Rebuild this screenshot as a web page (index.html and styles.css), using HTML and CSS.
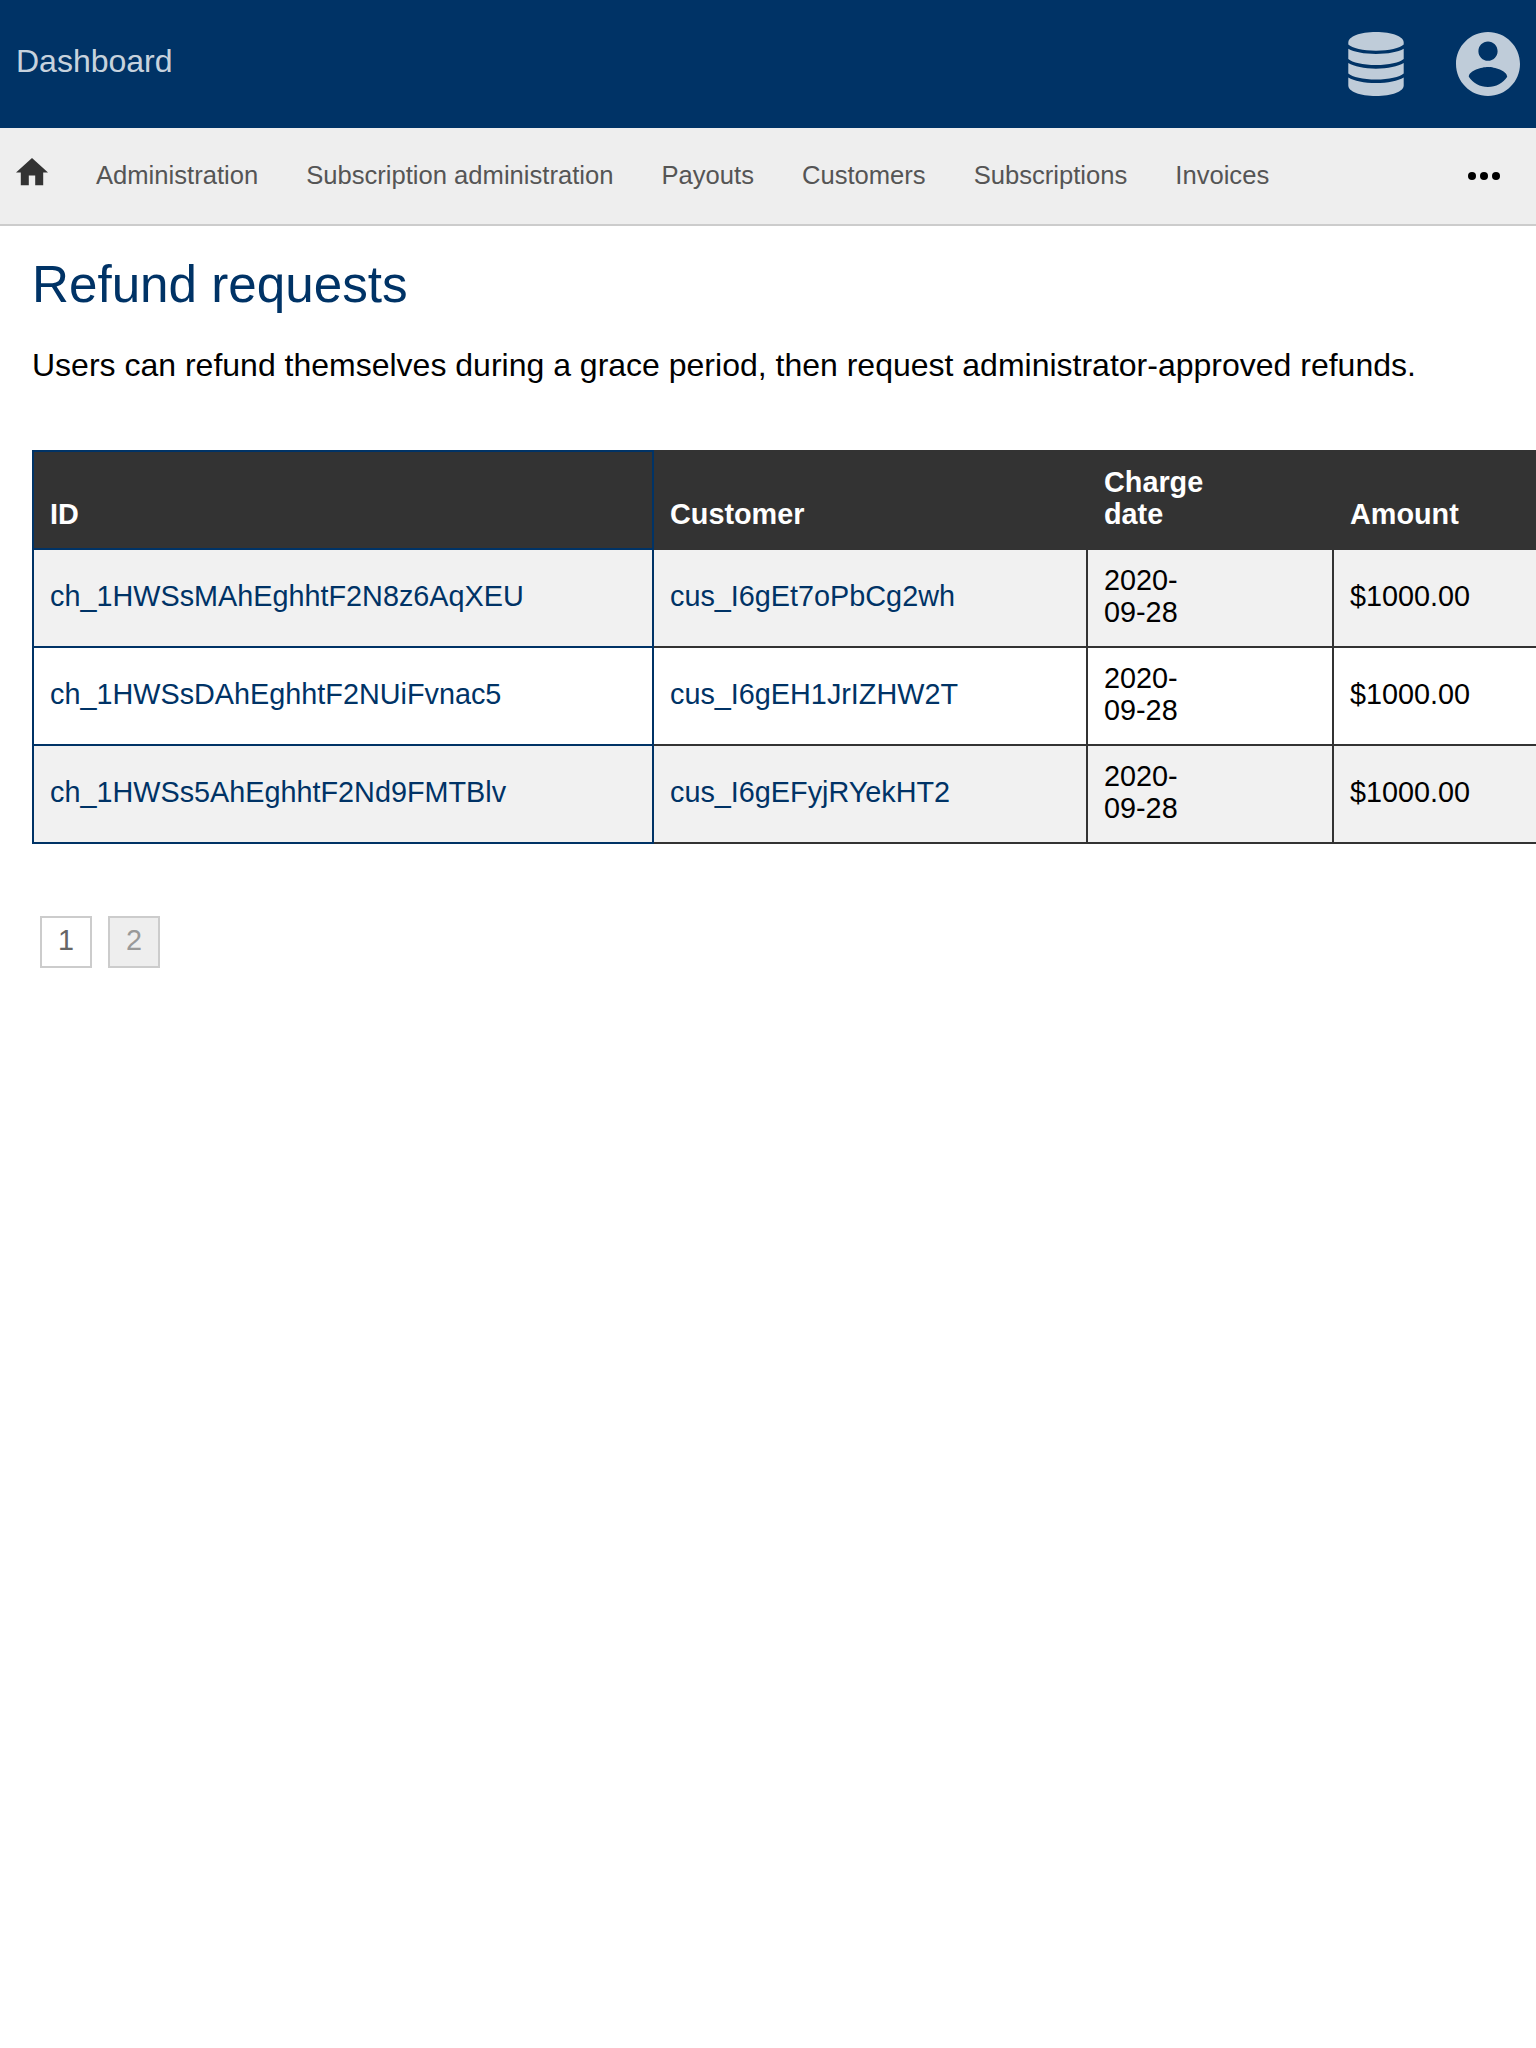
FILE: index.html
```html
<!DOCTYPE html>
<html lang="en">
<head>
<meta charset="utf-8">
<title>Refund requests</title>
<link rel="stylesheet" href="styles.css">
</head>
<body>
<header class="header">
  <a class="brand">Dashboard</a>
  <div class="header-menus">
    <svg class="icon-database" viewBox="0 0 56 64">
      <path d="M28 0C44 0 55.700 4.600 55.700 10.500V12.500C52 16 41 18.700 28 18.700S4 16 .3 12.500V10.500C.3 4.600 12 0 28 0z"/>
      <path d="M.3 16.800C6 20 16 22 28 22s22-2 27.700-5.200V27c-4 3.500-14.700 6-27.700 6S4.300 30.500.3 27z"/>
      <path d="M.3 31.100c5.700 3.500 15.700 5.600 27.700 5.600s22-2.100 27.700-5.600v10.400c-4 3.500-14.700 6-27.700 6S4.300 45 .3 41.500z"/>
      <path d="M.3 45.400C6 48.900 16 51 28 51s22-2.100 27.700-5.600V53.500C55.700 59.400 44 64 28 64S.3 59.400.3 53.500z"/>
    </svg>
    <svg class="icon-account" viewBox="2 2 20 20">
      <path d="M12 2C6.480 2 2 6.480 2 12s4.480 10 10 10 10-4.480 10-10S17.520 2 12 2zm0 3c1.660 0 3 1.340 3 3s-1.340 3-3 3-3-1.340-3-3 1.340-3 3-3zm0 14.200c-2.500 0-4.710-1.280-6-3.220.03-1.990 4-3.080 6-3.080 1.990 0 5.970 1.090 6 3.080-1.290 1.940-3.500 3.220-6 3.220z"/>
    </svg>
  </div>
</header>
<nav class="navigation">
  <svg class="icon-home" viewBox="2 3 20 17" preserveAspectRatio="none"><path d="M10 20v-6h4v6h5v-8h3L12 3 2 12h3v8z"/></svg>
  <a>Administration</a>
  <a>Subscription administration</a>
  <a>Payouts</a>
  <a>Customers</a>
  <a>Subscriptions</a>
  <a>Invoices</a>
  <svg class="icon-more" viewBox="0 0 32 8"><circle cx="4" cy="4" r="4"/><circle cx="16" cy="4" r="4"/><circle cx="28" cy="4" r="4"/></svg>
</nav>
<main class="content">
  <h1>Refund requests</h1>
  <p>Users can refund themselves during a grace period, then request administrator-approved refunds.</p>
  <table class="list">
    <colgroup><col class="col-id"><col class="col-customer"><col class="col-date"><col class="col-amount"></colgroup>
    <thead>
      <tr><th>ID</th><th>Customer</th><th>Charge<br>date</th><th>Amount</th></tr>
    </thead>
    <tbody>
      <tr><td><a>ch_1HWSsMAhEghhtF2N8z6AqXEU</a></td><td><a>cus_I6gEt7oPbCg2wh</a></td><td>2020-<br>09-28</td><td>$1000.00</td></tr>
      <tr><td><a>ch_1HWSsDAhEghhtF2NUiFvnac5</a></td><td><a>cus_I6gEH1JrIZHW2T</a></td><td>2020-<br>09-28</td><td>$1000.00</td></tr>
      <tr><td><a>ch_1HWSs5AhEghhtF2Nd9FMTBlv</a></td><td><a>cus_I6gEFyjRYekHT2</a></td><td>2020-<br>09-28</td><td>$1000.00</td></tr>
    </tbody>
  </table>
  <div class="pages">
    <a class="page current">1</a>
    <a class="page">2</a>
  </div>
</main>
</body>
</html>
```
FILE: styles.css
```css
* { box-sizing: border-box; }
html { height: 100%; }
body {
  margin: 0;
  min-height: 100%;
  overflow-x: hidden;
  background: #fff;
  color: #000;
  font-family: "Liberation Sans", Arial, sans-serif;
  font-size: 32px;
}
svg { display: block; flex: none; }
.header {
  display: flex;
  justify-content: space-between;
  align-items: center;
  height: 128px;
  padding: 0 16px;
  background: #036;
}
.brand {
  padding-bottom: 6px;
  line-height: 40px;
  color: rgba(255, 255, 255, 0.8);
}
.header-menus { display: flex; gap: 52px; fill: #bfccd9; }
.icon-database { width: 56px; height: 64px; }
.icon-account { width: 64px; height: 64px; }
.navigation {
  display: flex;
  align-items: center;
  gap: 48px;
  height: 98px;
  padding: 0 36px 0 16px;
  background: #eee;
  border-bottom: 2px solid #ccc;
  color: #555;
  font-size: 25.6px;
  line-height: 32px;
  white-space: nowrap;
}
.navigation a { padding-bottom: 2px; }
.icon-home { width: 32px; height: 27.2px; margin-bottom: 8px; fill: #333; }
.icon-more { width: 32px; height: 8px; margin-left: auto; }
.content { padding: 29px 0 0 32px; }
h1 {
  margin: 0 0 30px;
  color: #036;
  font-size: 51.2px;
  font-weight: normal;
  line-height: 60px;
}
p { margin: 0 0 65px; line-height: 40px; white-space: nowrap; }
.list {
  width: 1520px;
  table-layout: fixed;
  border-collapse: collapse;
  font-size: 28.8px;
  line-height: 32px;
}
.col-id { width: 620px; }
.col-customer { width: 434px; }
.col-date { width: 246px; }
.list th, .list td {
  padding: 14px 16px 18px;
  border: 2px solid #333;
  text-align: left;
}
.list th { background: #333; color: #fff; vertical-align: bottom; }
.list th:first-child, .list td:first-child { border-color: #036; }
.list tbody tr:nth-child(odd) { background: #f1f1f1; }
.list a { color: #036; }
.pages { display: flex; gap: 16px; padding: 72px 8px 0; }
.page {
  width: 52px;
  height: 52px;
  border: 2px solid #ccc;
  background: #eee;
  color: #999;
  font-size: 28.8px;
  line-height: 45px;
  text-align: center;
}
.page.current { background: #fff; color: #666; }
```
